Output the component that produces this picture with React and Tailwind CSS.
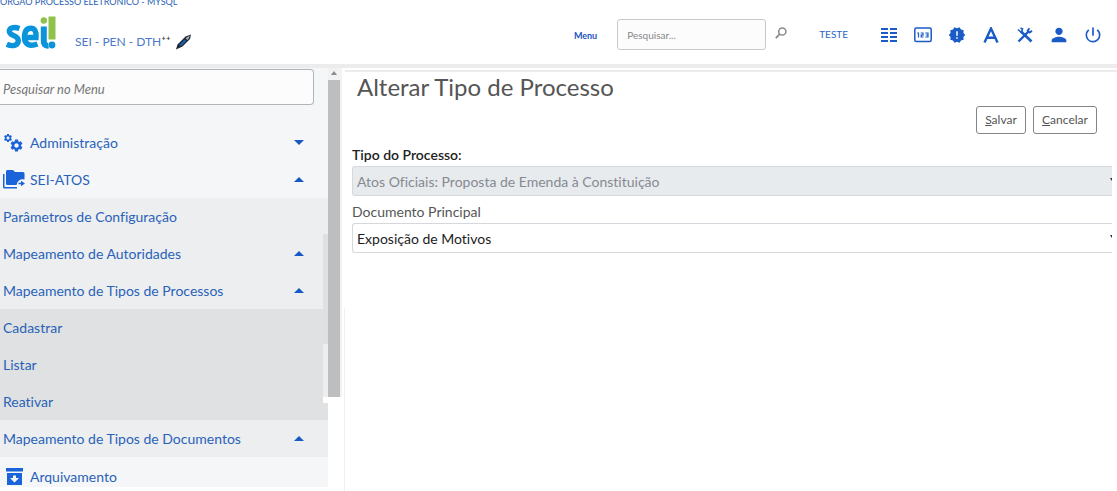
import { MdNewReleases, MdPerson, MdPowerSettingsNew, MdSettings } from "react-icons/md";

function Logo() {
  return (
    <svg viewBox="0 0 50 34" className="h-[34px] w-[50px]" role="img" aria-label="sei!">
      <g fill="none" stroke="#0a94dc" strokeWidth="5.400">
        <path d="M13.500 12.500C8 10.600 3.300 11.500 3.300 15.300C3.300 20.500 12.300 18.500 12.300 24.500C12.300 29.800 6 30.800 0.800 28.300" />
        <path d="M18.500 21.500H30C30.500 15 28.500 12.300 24.800 12.300C20.500 12.300 18.500 16 18.500 21.500C18.500 28.500 23.500 31 31.500 28" />
        <path d="M37.800 10.500V25C37.800 28.500 39 30 42.500 29.600" strokeWidth="6" />
      </g>
      <circle cx="37.800" cy="4.500" r="3.200" fill="#8fc14b" />
      <path d="M42.500 0.500H49.500V23.500H42.500Z" fill="#8fc14b" />
      <circle cx="46" cy="29" r="3.400" fill="#0a94dc" />
    </svg>
  );
}

function Pen() {
  return (
    <svg viewBox="0 0 17 16" className="h-4 w-[17px]" aria-hidden="true">
      <path d="M1 15.500L2.500 10.500L10.500 2.500L16 0.500L15 5L7.500 12.500Z" fill="#1d2733" />
      <path d="M4 11L9.500 5.500L11.500 7L6.500 12Z" fill="#1c5ca8" />
      <path d="M10.500 4.200L15 1.500L13.500 4.800L12.500 6Z" fill="#a9b4bf" />
    </svg>
  );
}

function ColumnsIcon() {
  return (
    <svg viewBox="0 0 16 16" className="h-4 w-4" fill="currentColor" aria-hidden="true">
      <path d="M0 1h7v2H0zM9 1h7v2H9zM0 5h7v2H0zM9 5h7v2H9zM0 9h7v2H0zM9 9h7v2H9zM0 13h7v2H0zM9 13h7v2H9z" />
    </svg>
  );
}

function NumbersIcon() {
  return (
    <svg viewBox="0 0 18 16" className="h-4 w-[18px]" fill="none" stroke="currentColor" aria-hidden="true">
      <rect x="0.800" y="1" width="16.400" height="13.500" rx="1.500" strokeWidth="1.500" />
      <path d="M3.200 6H4.500V10.500M6.700 6H9V8.100H7.200V10H9.500M11.300 6H14V10H11.300M11.800 8H14" strokeWidth="1.200" />
    </svg>
  );
}

function LetterIcon() {
  return (
    <svg viewBox="0 0 16 16" className="h-4 w-4" fill="none" stroke="currentColor" strokeWidth="2.400" aria-hidden="true">
      <path d="M1.500 15.500L8 1.500L14.500 15.500M4 10.800H12" />
    </svg>
  );
}

function ToolsIcon() {
  return (
    <svg viewBox="0 0 16 16" className="h-4 w-4" fill="none" stroke="currentColor" aria-hidden="true">
      <path d="M4 4.500L14.500 14.500" strokeWidth="2.600" />
      <path d="M1.500 14.500L11.500 4.500" strokeWidth="2.400" />
      <path d="M1 2.500L4.500 5.500L5.500 2L3.500 1" strokeWidth="1.600" />
      <path d="M12.500 1.300L10.700 3.500L12.800 5.500L15 3.800" strokeWidth="1.800" />
    </svg>
  );
}

function SearchIcon() {
  return (
    <svg viewBox="0 0 12 12" className="h-3 w-3" fill="none" stroke="#888" aria-hidden="true">
      <circle cx="7.300" cy="4.500" r="3.600" strokeWidth="1.500" />
      <path d="M4.800 7L0.800 11.200" strokeWidth="1.800" />
    </svg>
  );
}

function GearsIcon() {
  return (
    <span className="relative block h-5 w-[21px]">
      <MdSettings className="absolute top-0 left-0 h-[10px] w-[10px]" />
      <MdSettings className="absolute right-0 bottom-0 h-[15px] w-[15px]" />
    </span>
  );
}

function FolderIcon() {
  return (
    <svg viewBox="0 0 22 19" className="h-[19px] w-[22px]" fill="currentColor" aria-hidden="true">
      <path d="M0 4H1.500V17H14V18.500H1.500Q0 18.500 0 17Z" />
      <path d="M4.500 0H10L12 2H20Q21.500 2 21.500 3.500V9.500Q15 8.500 13.500 15H4.500Q3 15 3 13.500V1.500Q3 0 4.500 0Z" />
      <path d="M15.500 12.800H18V10.800L22 13.500L18 16.300V14.300H15.500Z" />
    </svg>
  );
}

function ArchiveIcon() {
  return (
    <svg viewBox="0 0 17 17" className="ml-[3px] h-[17px] w-[17px]" fill="currentColor" aria-hidden="true">
      <path d="M0 0H17V3.500H0Z" />
      <path fillRule="evenodd" d="M1 5H16V17H1ZM7 7.500V10H4L8.500 14.500L13 10H10V7.500Z" />
    </svg>
  );
}

function Caret({ up }) {
  return (
    <svg viewBox="0 0 10 5" className="h-[5px] w-[10px]" fill="currentColor" aria-hidden="true">
      <path d={up ? "M0 5L5 0L10 5Z" : "M0 0H10L5 5Z"} />
    </svg>
  );
}

const menu = [
  { text: "Administração", icon: GearsIcon, caret: "down" },
  { text: "SEI-ATOS", icon: FolderIcon, caret: "up" },
  { text: "Parâmetros de Configuração", level: 1 },
  { text: "Mapeamento de Autoridades", level: 1, caret: "up" },
  { text: "Mapeamento de Tipos de Processos", level: 1, caret: "up" },
  { text: "Cadastrar", level: 2 },
  { text: "Listar", level: 2 },
  { text: "Reativar", level: 2 },
  { text: "Mapeamento de Tipos de Documentos", level: 1, caret: "up" },
  { text: "Arquivamento", icon: ArchiveIcon },
];

const levelColors = ["bg-[#f4f6f8]", "bg-[#eceef0]", "bg-[#dfe1e3]"];

const tools = [
  { label: "Painel", icon: <ColumnsIcon /> },
  { label: "Numeração", icon: <NumbersIcon /> },
  { label: "Novidades", icon: <MdNewReleases className="h-[18px] w-[18px]" /> },
  { label: "Fonte", icon: <LetterIcon /> },
  { label: "Configurações", icon: <ToolsIcon /> },
  { label: "Usuário", icon: <MdPerson className="h-[22px] w-[22px]" /> },
  { label: "Sair", icon: <MdPowerSettingsNew className="h-5 w-5" /> },
];

function Header() {
  return (
    <header className="border-b-4 border-[#ececec] bg-white">
      <div className="flex h-2 items-end overflow-hidden text-[9px] leading-3 text-[#2a5fb4]">
        <p className="whitespace-nowrap">ORGAO PROCESSO ELETRONICO - MYSQL</p>
      </div>
      <div className="flex h-14 items-start">
        <div className="flex items-end gap-[19px] pt-2 pl-[6px]">
          <Logo />
          <p className="flex items-center pt-[2px] text-[12px] leading-4 text-[#4a78cc]">
            SEI - PEN - DTH<span className="pr-1 text-[14px] text-[#333]">⁺⁺</span>
            <Pen />
          </p>
        </div>
        <div className="ml-auto flex items-center pt-[11px] pr-3">
          <a href="#menu" className="mr-5 pt-[2px] text-[9px] font-bold text-[#1a56bf]">Menu</a>
          <input
            type="search"
            aria-label="Pesquisar"
            placeholder="Pesquisar..."
            className="h-[31px] w-[149px] rounded-[3px] border border-[#c8caca] bg-[#fcfcfc] px-[9px] text-[10px] placeholder:text-[#888]"
          />
          <button aria-label="Buscar" className="mr-8 ml-[9px] mb-1">
            <SearchIcon />
          </button>
          <a href="#teste" className="mr-[29px] text-[10px] text-[#2b69c4]">TESTE</a>
          <nav className="flex items-center gap-[10px] text-[#1a5bc8]">
            {tools.map((t) => (
              <button key={t.label} aria-label={t.label} className="flex h-6 w-6 items-center justify-center">
                {t.icon}
              </button>
            ))}
          </nav>
        </div>
      </div>
    </header>
  );
}

function Sidebar() {
  return (
    <aside className="relative w-[345px] shrink-0">
      <div className="w-[328px] bg-[#f4f6f8]">
        <div className="pt-px pr-[14px] pb-[19px]">
          <input
            type="search"
            aria-label="Pesquisar no Menu"
            placeholder="Pesquisar no Menu"
            className="h-9 w-full rounded-r-[4px] border border-l-0 border-[#b0b5ba] bg-[#fcfcfd] px-[3px] pt-[3px] text-[13px] italic placeholder:text-[#777]"
          />
        </div>
        <ul>
          {menu.map((m) => (
            <li key={m.text} className={levelColors[m.level || 0]}>
              <a
                href="#item"
                className={
                  "flex items-center pl-[3px] pr-[24px] text-[14px] text-[#2a62b8] " +
                  (m.icon === ArchiveIcon ? "h-[30px] pt-2" : "h-[37px]")
                }
              >
                {m.icon && (
                  <span className="flex w-[27px] text-[#1a63d8]">
                    <m.icon />
                  </span>
                )}
                <span>{m.text}</span>
                {m.caret && (
                  <span className="ml-auto text-[#1857c4]">
                    <Caret up={m.caret === "up"} />
                  </span>
                )}
              </a>
            </li>
          ))}
        </ul>
      </div>
      <div className="absolute top-[166px] left-[323px] flex h-[169px] w-[5px] flex-col bg-[#eceef0]" aria-hidden="true">
        <div className="h-[110px] bg-[#dfe0e2]" />
        <div className="mt-auto h-[6px] bg-white" />
      </div>
      <div className="absolute top-0 left-[328px] flex h-[329px] w-[14px] flex-col items-center bg-[#f2f2f2] pt-[3px] pr-[2px]" aria-hidden="true">
        <svg viewBox="0 0 6 4" className="h-1 w-[6px]">
          <path d="M0 4L3 0L6 4Z" fill="#8a8a8a" />
        </svg>
        <div className="mt-[5px] w-3 grow bg-[#bebebe]" />
      </div>
      <div className="absolute top-[240px] right-0 bottom-0 w-px bg-[#f0f0f0]" aria-hidden="true" />
    </aside>
  );
}

function Field({ id, label, value, disabled }) {
  return (
    <div>
      <label
        htmlFor={id}
        className={"block text-[14px] leading-[22px] " + (disabled ? "font-semibold text-[#222]" : "text-[#555]")}
      >
        {label}
      </label>
      <div className="relative overflow-hidden">
        <select
          id={id}
          disabled={disabled}
          className={
            "block h-[30px] w-full appearance-none rounded-l-[3px] border border-r-0 border-[#d5d9de] px-1 pt-px text-[14px] " +
            (disabled ? "bg-[#e8ebee] text-[#858a90] opacity-100" : "bg-white text-[#1c1c1c]")
          }
        >
          <option>{value}</option>
        </select>
        <svg viewBox="0 0 5 4" className="pointer-events-none absolute top-[12px] -right-[3px] h-1 w-[5px]" aria-hidden="true">
          <path d="M0 0H5L2.500 4Z" fill="#333" />
        </svg>
      </div>
    </div>
  );
}

export default function App() {
  return (
    <div className="flex min-h-screen flex-col bg-white font-['Lato',sans-serif] [font-variant-ligatures:none]">
      <Header />
      <div className="flex grow items-stretch">
        <Sidebar />
        <main className="mt-[2px] min-w-0 grow border-t-2 border-[#ececec] pr-[5px] pl-[7px]">
          <h1 className="pl-[5px] text-[24px] leading-[29px] text-[#555]">Alterar Tipo de Processo</h1>
          <div className="flex justify-end gap-[7px] pt-[5px] pr-[15px] pb-[10px] text-[12px] text-[#555]">
            <button className="h-7 w-[50px] rounded-[3px] border border-[#858585]">
              <u>S</u>alvar
            </button>
            <button className="h-7 w-16 rounded-[3px] border border-[#858585]">
              <u>C</u>ancelar
            </button>
          </div>
          <form className="flex flex-col gap-[5px]">
            <Field id="tipo" label="Tipo do Processo:" value="Atos Oficiais: Proposta de Emenda à Constituição" disabled />
            <Field id="documento" label="Documento Principal" value="Exposição de Motivos" />
          </form>
        </main>
      </div>
    </div>
  );
}
